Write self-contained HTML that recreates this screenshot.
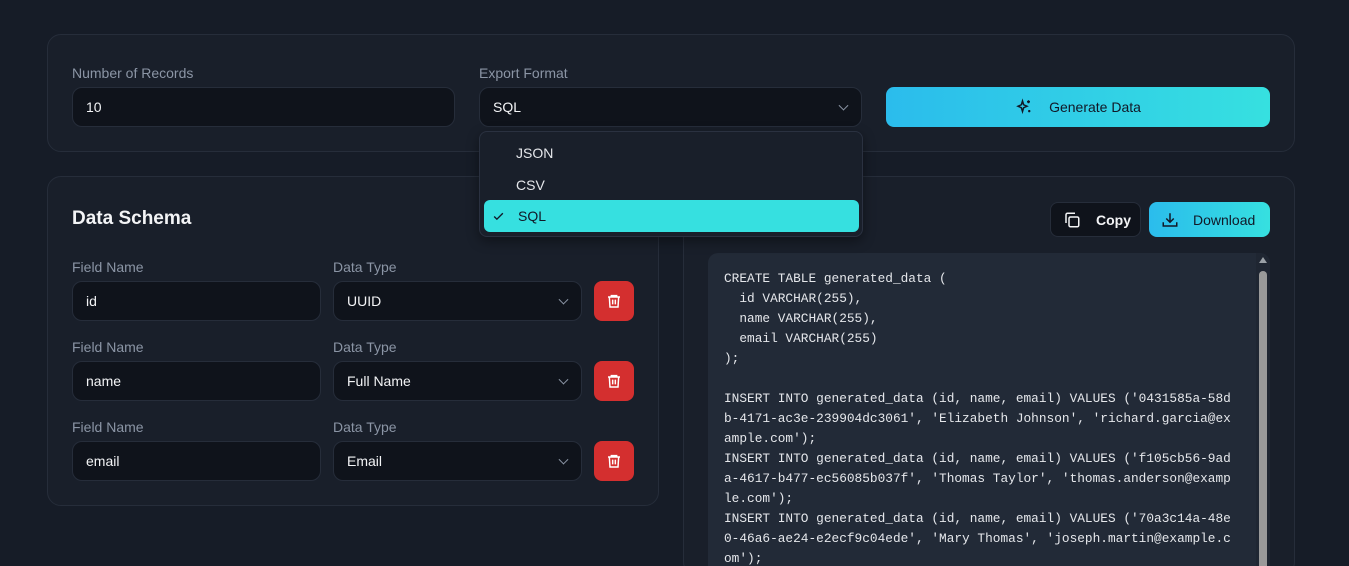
<!DOCTYPE html>
<html><head><meta charset="utf-8"><style>
*{box-sizing:border-box;margin:0;padding:0}
html{width:1349px;height:566px;overflow:hidden}
body{width:1349px;height:566px;overflow:hidden;background:#161c27;font-family:"Liberation Sans",sans-serif;color:#e5e7eb;position:relative}
.card{position:absolute;background:#191f2a;border:1px solid #262d3a;border-radius:14px}
.lbl{position:absolute;font-size:14px;color:#8b95a5}
.inp{position:absolute;background:#0f131b;border:1px solid #262d3a;border-radius:10px;font-size:14px;color:#f3f4f6;padding-left:13px;display:flex;align-items:center}
.chev{position:absolute;right:14px;top:50%;width:7px;height:7px;border-right:1.5px solid #8b95a5;border-bottom:1.5px solid #8b95a5;transform:translateY(-70%) rotate(45deg)}
.del{position:absolute;width:40px;height:40px;background:#d42f2f;border-radius:8px;display:flex;align-items:center;justify-content:center}
.grad{background:linear-gradient(90deg,#2bbcec,#36e0e0)}
pre{font-family:"Liberation Mono",monospace;font-size:12.8px;line-height:20px;color:#e5e7eb}
</style></head><body>
<div class="card" style="left:47px;top:34px;width:1248px;height:118px"></div>
<div class="lbl" style="left:72px;top:65px">Number of Records</div>
<div class="inp" style="left:72px;top:87px;width:383px;height:40px">10</div>
<div class="lbl" style="left:479px;top:65px">Export Format</div>
<div class="inp" style="left:479px;top:87px;width:383px;height:40px">SQL<span class="chev"></span></div>
<div class="grad" style="position:absolute;left:886px;top:87px;width:384px;height:40px;border-radius:8px;display:flex;align-items:center;justify-content:center;font-size:14px;color:#111827">
<svg width="18" height="18" viewBox="0 0 24 24" fill="none" stroke="#111827" stroke-width="2" style="margin-right:16px"><path d="M10 4l1.5 5L16 11l-4.5 2L10 18l-1.5-5L4 11l4.5-2z"/><path d="M18 3v4M16 5h4M19 16v3M17.5 17.5h3"/></svg>Generate Data</div>

<div class="card" style="left:47px;top:176px;width:612px;height:330px"></div>
<div style="position:absolute;left:72px;top:208px;font-size:19px;font-weight:bold;color:#f3f4f6">Data Schema</div>

<div class="lbl" style="left:72px;top:259px">Field Name</div><div class="lbl" style="left:333px;top:259px">Data Type</div>
<div class="inp" style="left:72px;top:281px;width:249px;height:40px">id</div>
<div class="inp" style="left:333px;top:281px;width:249px;height:40px">UUID<span class="chev"></span></div>
<div class="del" style="left:594px;top:281px"><svg width="16" height="16" viewBox="0 0 24 24" fill="none" stroke="#fff" stroke-width="2.2"><path d="M3 6h18M8 6V4h8v2M5 6l1 15h12l1-15M10 10v7M14 10v7"/></svg></div>

<div class="lbl" style="left:72px;top:339px">Field Name</div><div class="lbl" style="left:333px;top:339px">Data Type</div>
<div class="inp" style="left:72px;top:361px;width:249px;height:40px">name</div>
<div class="inp" style="left:333px;top:361px;width:249px;height:40px">Full Name<span class="chev"></span></div>
<div class="del" style="left:594px;top:361px"><svg width="16" height="16" viewBox="0 0 24 24" fill="none" stroke="#fff" stroke-width="2.2"><path d="M3 6h18M8 6V4h8v2M5 6l1 15h12l1-15M10 10v7M14 10v7"/></svg></div>

<div class="lbl" style="left:72px;top:419px">Field Name</div><div class="lbl" style="left:333px;top:419px">Data Type</div>
<div class="inp" style="left:72px;top:441px;width:249px;height:40px">email</div>
<div class="inp" style="left:333px;top:441px;width:249px;height:40px">Email<span class="chev"></span></div>
<div class="del" style="left:594px;top:441px"><svg width="16" height="16" viewBox="0 0 24 24" fill="none" stroke="#fff" stroke-width="2.2"><path d="M3 6h18M8 6V4h8v2M5 6l1 15h12l1-15M10 10v7M14 10v7"/></svg></div>

<div class="card" style="left:683px;top:176px;width:612px;height:400px"></div>
<div style="position:absolute;left:1050px;top:202px;width:91px;height:35px;background:#0f131b;border:1px solid #262d3a;border-radius:8px;display:flex;align-items:center;font-size:14px;font-weight:bold;color:#f3f4f6">
<svg width="18" height="18" viewBox="0 0 24 24" fill="none" stroke="#f3f4f6" stroke-width="2" style="margin:0 15px 0 12px"><rect x="8" y="8" width="13" height="13" rx="2"/><path d="M4 16V5a2 2 0 0 1 2-2h10"/></svg>Copy</div>
<div class="grad" style="position:absolute;left:1149px;top:202px;width:121px;height:35px;border-radius:8px;display:flex;align-items:center;font-size:14px;color:#111827">
<svg width="18" height="18" viewBox="0 0 24 24" fill="none" stroke="#111827" stroke-width="2" style="margin:0 14px 0 12px"><path d="M12 3v12M7 10l5 5 5-5M3 15v5h18v-5"/></svg>Download</div>
<div style="position:absolute;left:708px;top:253px;width:562px;height:330px;background:#222a37;border-radius:10px;overflow:hidden">
<pre style="position:absolute;left:16px;top:16px">CREATE TABLE generated_data (
  id VARCHAR(255),
  name VARCHAR(255),
  email VARCHAR(255)
);

INSERT INTO generated_data (id, name, email) VALUES ('0431585a-58d
b-4171-ac3e-239904dc3061', 'Elizabeth Johnson', 'richard.garcia@ex
ample.com');
INSERT INTO generated_data (id, name, email) VALUES ('f105cb56-9ad
a-4617-b477-ec56085b037f', 'Thomas Taylor', 'thomas.anderson@examp
le.com');
INSERT INTO generated_data (id, name, email) VALUES ('70a3c14a-48e
0-46a6-ae24-e2ecf9c04ede', 'Mary Thomas', 'joseph.martin@example.c
om');</pre>
<div style="position:absolute;right:0;top:0;width:14px;height:330px;background:#1f2632"></div>
<div style="position:absolute;right:3px;top:4px;width:0;height:0;border-left:4px solid transparent;border-right:4px solid transparent;border-bottom:6px solid #9aa0a6"></div>
<div style="position:absolute;right:3px;top:18px;width:8px;height:320px;background:#9a9a9a;border-radius:4px"></div>
</div>

<div style="position:absolute;left:479px;top:131px;width:384px;height:106px;background:#191f2a;border:1px solid #2a3140;border-radius:8px;box-shadow:0 4px 12px rgba(0,0,0,.4)">
<div style="position:absolute;left:36px;top:13px;font-size:14px;color:#e5e7eb">JSON</div>
<div style="position:absolute;left:36px;top:45px;font-size:14px;color:#e5e7eb">CSV</div>
<div style="position:absolute;left:4px;top:68px;width:375px;height:32px;background:#36e0e0;border-radius:6px;font-size:14px;color:#111827;display:flex;align-items:center">
<svg width="13" height="13" viewBox="0 0 24 24" fill="none" stroke="#111827" stroke-width="2.5" style="margin:0 13px 0 8px"><path d="M4 12l5 5L20 6"/></svg>SQL</div>
</div>
</body></html>
